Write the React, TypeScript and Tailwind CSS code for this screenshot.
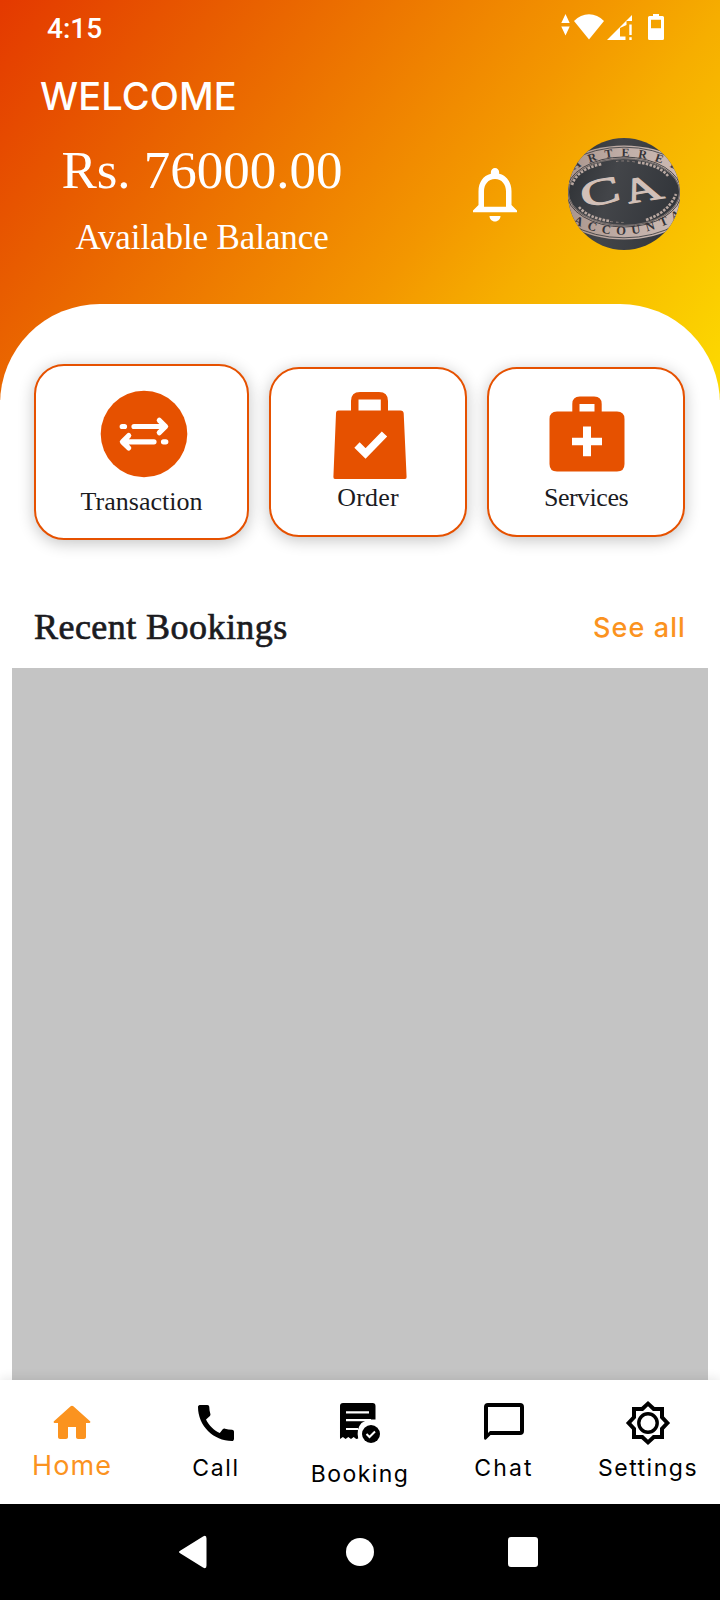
import type { ReactNode } from "react";

function StatusIcons() {
  return (
    <svg width="104" height="28" viewBox="560 13 104 28" fill="#fff">
      <path d="M565.5 14l4.2 9h-8.400zM565.5 35.500l4.200-9h-8.400z" />
      <path d="M589 39.500L574 21q6.500-6.800 15-6.800T604 21z" />
      <path d="M607 40L632 15v6h-5.500v4L620 28v8.500h5.500V40z" />
      <path d="M629.300 24.500h2.400V35h-2.400zM629.300 37.200h2.400V40h-2.400z" />
      <path fillRule="evenodd" d="M653 14h6v2h3.500q1.500 0 1.500 1.500v21q0 1.500-1.500 1.500h-13q-1.500 0-1.500-1.500v-21q0-1.500 1.500-1.500h3.500zM651 19.800v8.400h10v-8.400z" />
    </svg>
  );
}

function Bell() {
  return (
    <svg width="66" height="66" viewBox="0 0 24 24" fill="#fff">
      <path d="M12 22c1.100 0 2-.9 2-2h-4c0 1.100.9 2 2 2zm6-6v-5c0-3.070-1.630-5.640-4.500-6.320V4c0-.83-.67-1.500-1.500-1.500s-1.500.67-1.500 1.500v.68C7.640 5.360 6 7.920 6 11v5l-2 2v.6h16V18l-2-2zm-2 .6H8V11c0-2.480 1.510-4.500 4-4.500s4 2.020 4 4.500z" />
    </svg>
  );
}

function Avatar() {
  return (
    <svg width="112" height="112" viewBox="0 0 112 112" className="rounded-full">
      <defs>
        <linearGradient id="slate" x1="0" x2="1" y1="0" y2=".2">
          <stop offset="0" stopColor="#2e3135" />
          <stop offset=".45" stopColor="#434549" />
          <stop offset="1" stopColor="#34373c" />
        </linearGradient>
        <linearGradient id="metal" x1="0" x2="1">
          <stop offset="0" stopColor="#a28c83" />
          <stop offset=".5" stopColor="#c0aea7" />
          <stop offset="1" stopColor="#d0bdb6" />
        </linearGradient>
        <path id="topArc" d="M6 32Q56 4 112 34" />
        <path id="bottomArc" d="M3 84Q56 112 113 79" />
      </defs>
      <rect width="112" height="112" fill="url(#slate)" />
      <ellipse cx="56" cy="54.500" rx="76" ry="47" fill="url(#metal)" />
      <ellipse cx="56" cy="54.500" rx="74" ry="45.300" fill="none" stroke="#34363a" strokeWidth=".8" />
      <ellipse cx="56" cy="54" rx="57.500" ry="35" fill="none" stroke="#3b3a3c" strokeWidth=".9" />
      <ellipse cx="56" cy="54" rx="56" ry="34" fill="url(#slate)" />
      <ellipse cx="56" cy="54" rx="55.500" ry="33.300" fill="none" stroke="#a5958f" strokeWidth=".6" />
      <g fill="none" stroke="#b9a8a1" strokeWidth="2.600" strokeDasharray="2.600 1.300">
        <path d="M4 47Q9 31 34 26" />
        <path d="M70 24.500Q91 27 100 38" />
        <path d="M11 69Q20 80 42 83" />
        <path d="M78 82Q101 74 108 56" />
      </g>
      <path d="M48 23.500Q58 22 70 24.500M42 83.500Q50 84.500 56 84.500" fill="none" stroke="#8f827e" strokeWidth="1" strokeDasharray="2.500 3" />
      <g fontFamily="Liberation Serif, serif" fontWeight="700" fill="#353438">
        <text fontSize="12"><textPath href="#topArc" startOffset="0" textLength="108">ARTERED</textPath></text>
        <text fontSize="12.500"><textPath href="#bottomArc" startOffset="2" textLength="114">ACCOUNTA</textPath></text>
      </g>
      <g fontFamily="Liberation Serif, serif" fontWeight="400" fill="#d2c0b8" stroke="#d2c0b8" strokeWidth="1">
        <text transform="translate(15 70) rotate(-12) scale(1.620 1)" fontSize="37">C</text>
        <text transform="translate(61 65.500) rotate(-9) skewX(18) scale(1.420 1)" fontSize="36">A</text>
      </g>
    </svg>
  );
}

function TransferIcon() {
  return (
    <svg width="88" height="88" viewBox="0 0 88 88">
      <circle cx="44" cy="44" r="43.300" fill="#e65100" />
      <g stroke="#fff" strokeWidth="5.200" strokeLinecap="round" strokeLinejoin="round" fill="none">
        <path d="M22.200 36.500h2.300M34 36.500h31M59.300 30.300l6.300 6.200-6.300 6.200M63.500 51.800h2.300M23 51.800h31M28.700 45.600l-6.300 6.200 6.300 6.200" />
      </g>
    </svg>
  );
}

function BagIcon() {
  return (
    <svg width="74" height="88" viewBox="0 0 74 88">
      <path fillRule="evenodd" fill="#e65100" d="M5.500 19.500H18V10Q18 1 27 1h19q9 0 9 9v9.500h12.500q3 0 3.200 3L73.600 86q.1 2-1.600 2H2Q.3 88 .4 86L3 22.500q0-3 2.500-3zM25.500 8.500v11h22.300v-11z" />
      <path d="M24 54l8.500 8.500L51.500 43" fill="none" stroke="#fff" strokeWidth="7.500" strokeLinejoin="miter" />
    </svg>
  );
}

function CaseIcon() {
  return (
    <svg width="76" height="76" viewBox="0 0 76 76">
      <path fillRule="evenodd" fill="#e65100" d="M8 15.500h15.300V8q0-7.500 7.500-7.500h14.400q7.500 0 7.500 7.500v7.500H68q7.500 0 7.500 7.500v45q0 7.500-7.500 7.500H8Q.5 75.500.5 68V23q0-7.500 7.500-7.500zM30.500 8v7.500h15V8z" />
      <path fill="#fff" d="M34 30.500h8v11.200h11v7.600H42v11h-8v-11H23v-7.600h11z" />
    </svg>
  );
}

function HomeIcon() {
  return (
    <svg width="48" height="48" viewBox="0 0 24 24" fill="#fb931f">
      <path d="M10 19v-5h4v5c0 .55.45 1 1 1h3c.55 0 1-.45 1-1v-7h1.700c.46 0 .68-.57.33-.87L12.670 3.600c-.38-.34-.96-.34-1.340 0l-8.360 7.530c-.34.3-.13.87.33.87H5v7c0 .55.45 1 1 1h3c.55 0 1-.45 1-1z" />
    </svg>
  );
}

function CallIcon() {
  return (
    <svg width="48" height="48" viewBox="0 0 24 24">
      <path d="M20.010 15.380c-1.230 0-2.420-.2-3.530-.56-.35-.12-.74-.03-1.010.24l-1.570 1.970c-2.830-1.350-5.480-3.900-6.890-6.830l1.950-1.660c.27-.28.35-.67.24-1.020-.37-1.110-.56-2.300-.56-3.530 0-.54-.45-.99-.99-.99H4.190C3.650 3 3 3.240 3 3.990 3 13.280 10.730 21 20.010 21c.71 0 .99-.63.99-1.180v-3.450c0-.54-.45-.99-.99-.99z" />
    </svg>
  );
}

function BookingIcon() {
  return (
    <svg width="48" height="48" viewBox="336 1399 48 48">
      <path d="M340 1406q0-3 3-3h29.500q3 0 3 3v13.500h-5q-10 1-12.500 10-.8 4 .2 9l-2 .5-2.500-2-2.700 2-2.700-2-2.700 2-2.700-2-2.900 2z" />
      <path d="M346 1412.300h23M346 1420.200h25M346 1429h12" stroke="#fff" strokeWidth="2.200" />
      <circle cx="371" cy="1434" r="9" />
      <path d="M366.500 1434l3 3 5.500-5.500" fill="none" stroke="#fff" strokeWidth="2" />
    </svg>
  );
}

function ChatIcon() {
  return (
    <svg width="48" height="48" viewBox="480 1399 48 48">
      <path fillRule="evenodd" d="M488 1403h32q4 0 4 4v24q0 4-4 4h-29.500l-4.500 4.500q-2 1-2-1.500v-31q0-4 4-4zM488 1407v26l2-2h30v-24z" />
    </svg>
  );
}

function SettingsIcon() {
  return (
    <svg width="48" height="48" viewBox="0 0 24 24">
      <path fillRule="evenodd" d="M20 8.690V4h-4.690L12 .95 8.690 4H4v4.690L.95 12 4 15.310V20h4.690L12 23.050 15.310 20H20v-4.690L23.050 12zM18 9.520V6h-3.520L12 3.650 9.520 6H6v3.520L3.650 12 6 14.480V18h3.520L12 20.350 14.480 18H18v-3.520L20.350 12z" />
      <circle cx="12" cy="12" r="4.600" fill="none" stroke="#000" strokeWidth="1.700" />
    </svg>
  );
}

function Card({ className, children }: { className: string; children: ReactNode }) {
  return (
    <div
      className={`flex flex-col items-center rounded-[30px] border-2 border-[#e65100] bg-white text-[26px] leading-[30px] text-[#1b1b1f] shadow-[0_3px_16px_rgba(0,0,0,0.24)] ${className}`}
    >
      {children}
    </div>
  );
}

function Tab({ icon, label, className }: { icon: ReactNode; label: string; className: string }) {
  return (
    <div className="flex w-[144px] flex-col items-center pt-[19px] whitespace-nowrap">
      {icon}
      <span className={className}>{label}</span>
    </div>
  );
}

export default function App() {
  return (
    <div className="flex h-[1600px] w-[720px] flex-col overflow-hidden bg-white bg-[linear-gradient(128deg,#e43900_0%,#e85c00_22%,#f39700_59%,#f6ae00_71%,#fddb00_100%)] bg-[length:720px_400px] bg-no-repeat font-['Liberation_Serif',serif]">
      <header className="flex h-[304px] shrink-0 flex-col text-white">
        <div className="flex h-[54px] items-center justify-between pr-[56px] pl-[47px]">
          <span className="pt-[3px] font-[Roboto,sans-serif] text-[28px] leading-8 font-medium">4:15</span>
          <StatusIcons />
        </div>
        <div className="flex">
          <div className="flex w-[404px] flex-col items-center">
            <h1 className="mt-[18px] self-start pl-[40px] font-[Inter,sans-serif] text-[38px] leading-[48px] font-medium tracking-[0.1px] whitespace-nowrap">WELCOME</h1>
            <p className="mt-[20px] text-[53px] leading-[60px] whitespace-nowrap">Rs. 76000.00</p>
            <p className="mt-[18px] text-[35px] leading-[40px] tracking-[-0.1px] whitespace-nowrap">Available Balance</p>
          </div>
          <div className="mt-[84px] ml-[58px] flex gap-[40px]">
            <div className="mt-[23px]"><Bell /></div>
            <Avatar />
          </div>
        </div>
      </header>

      <main className="flex min-h-0 flex-1 flex-col rounded-t-[100px] bg-white">
        <section className="mt-[60px] flex h-[176px] shrink-0 items-center gap-[20px] pl-[34px]">
          <Card className="h-[176px] w-[215px] pt-[24px]">
            <div className="ml-[4px]"><TransferIcon /></div>
            <span className="mt-[9px] tracking-[0px]">Transaction</span>
          </Card>
          <Card className="h-[170px] w-[198px] pt-[22px]">
            <div className="ml-[4px]"><BagIcon /></div>
            <span className="mt-[4px] tracking-[0.2px]">Order</span>
          </Card>
          <Card className="h-[170px] w-[198px] pt-[27px]">
            <div className="ml-[2px]"><CaseIcon /></div>
            <span className="mt-[11px] tracking-[-0.5px]">Services</span>
          </Card>
        </section>
        <section className="mt-[64px] flex h-[64px] shrink-0 items-start justify-between pr-[34px] pl-[34px]">
          <h2 className="mt-[2px] text-[36px] leading-[42px] tracking-[0.45px] text-[#1b1b1f] [-webkit-text-stroke:0.7px_#1b1b1f]">Recent Bookings</h2>
          <a className="mt-[4px] font-[Inter,sans-serif] text-[27px] leading-[40px] font-medium tracking-[1.1px] text-[#fb931f]">See all</a>
        </section>
        <div className="mx-[12px] min-h-0 flex-1 bg-[#c4c4c4]" />
      </main>

      <nav className="relative flex h-[124px] shrink-0 bg-white font-[Inter,sans-serif] text-[23px] leading-[28px] text-black shadow-[0_-2px_10px_rgba(0,0,0,0.09)]">
        <Tab icon={<HomeIcon />} label="Home" className="mt-[4px] text-[27px] leading-[30px] tracking-[1.1px] text-[#fb931f]" />
        <Tab icon={<CallIcon />} label="Call" className="mt-[7px] tracking-[1.6px]" />
        <Tab icon={<BookingIcon />} label="Booking" className="mt-[13px] tracking-[1.4px]" />
        <Tab icon={<ChatIcon />} label="Chat" className="mt-[7px] tracking-[2.2px]" />
        <Tab icon={<SettingsIcon />} label="Settings" className="mt-[7px] tracking-[1.500px]" />
      </nav>

      <footer className="relative flex h-[96px] shrink-0 items-center bg-black">
        <svg width="29" height="34" viewBox="0 0 29 34" className="ml-[178px]">
          <path d="M25 1.500q3.500-2 3.500 2v27q0 4-3.500 2L2.500 18.500q-3-1.500 0-3z" fill="#fff" />
        </svg>
        <div className="ml-[139px] size-[28px] rounded-full bg-white" />
        <div className="ml-[134px] size-[30px] rounded-[3px] bg-white" />
      </footer>
    </div>
  );
}
